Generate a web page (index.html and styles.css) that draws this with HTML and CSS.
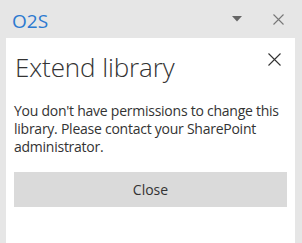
FILE: index.html
```html
<!DOCTYPE html>
<html lang="en">
<head>
    <meta charset="UTF-8">
    <title>O2S</title>
    <link rel="stylesheet" href="styles.css">
</head>
<body>
    <div class="taskpane">
        <div class="pane-header">
            <span class="pane-title">O2S</span>
            <div class="pane-actions">
                <svg class="pane-menu" width="10" height="6" viewBox="0 0 10 6"><path d="M0 0 H10 L5 5.5 Z" fill="#666"/></svg>
                <svg class="pane-close" width="11" height="11" viewBox="0 0 11 11"><path d="M0.5 0.5 L10.5 10.5 M10.5 0.5 L0.5 10.5" stroke="#777" stroke-width="1.1"/></svg>
            </div>
        </div>

        <div class="dialog">
            <div class="dialog-head">
                <h2>Extend library</h2>
                <svg class="dialog-close" width="13" height="13" viewBox="0 0 13 13"><path d="M0.5 0.5 L12.5 12.5 M12.5 0.5 L0.5 12.5" stroke="#333" stroke-width="1.1"/></svg>
            </div>
            <p class="message">You don't have permissions to change this library. Please contact your SharePoint administrator.</p>
            <button type="button">Close</button>
        </div>
    </div>
</body>
</html>
```

FILE: styles.css
```css
body {
    font-family: "Open Sans", "Segoe UI", sans-serif;
    margin: 0;
    padding: 0;
    background-color: #e6e6e6;
}

.taskpane {
    height: 243px;
    display: flex;
    flex-direction: column;
    overflow: hidden;
}

.pane-header {
    display: flex;
    align-items: center;
    justify-content: space-between;
    height: 38px;
    padding: 0 18px 0 12px;
}

.pane-title {
    font-size: 19px;
    color: #2b79d0;
    margin-top: 4px;
}

.pane-actions {
    display: flex;
    align-items: center;
    gap: 31px;
    margin-top: 1px;
}

.pane-menu {
    margin-top: -1px;
}

.dialog {
    flex: 1;
    margin: 0 7px 0 6px;
    background-color: white;
    padding: 0 8px 0 8px;
}

.dialog-head {
    display: flex;
    justify-content: space-between;
    align-items: flex-start;
}

h2 {
    font-weight: 300;
    font-size: 26px;
    letter-spacing: -0.1px;
    color: #333;
    margin: 11px 0 0 1px;
    line-height: 36px;
}

.dialog-close {
    margin: 15px 6px 0 0;
}

.message {
    font-size: 14px;
    letter-spacing: -0.25px;
    line-height: 18px;
    color: #333;
    margin: 17px 0 0 0;
}

button {
    font-family: inherit;
    font-size: 14px;
    color: #333;
    width: 100%;
    height: 35px;
    margin-top: 16px;
    background-color: #dadada;
    border: none;
    border-radius: 0;
}
```
